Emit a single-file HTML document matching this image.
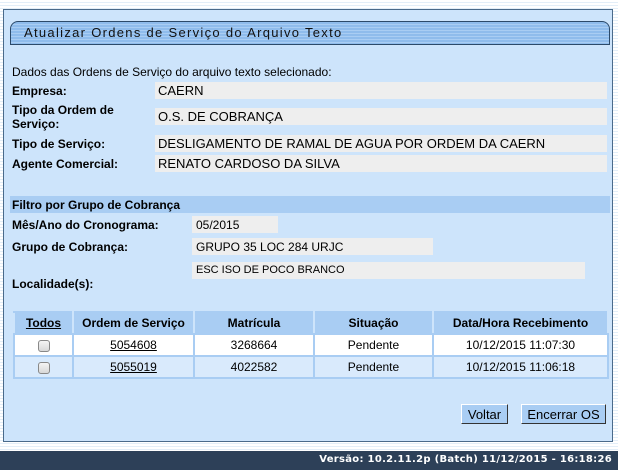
<!DOCTYPE html>
<html><head><meta charset="utf-8"><style>
*{margin:0;padding:0;box-sizing:border-box}
body{width:618px;height:470px;position:relative;overflow:hidden;font-family:"Liberation Sans",Arial,sans-serif;font-size:12px;color:#000;background:repeating-linear-gradient(#fff 0 2px,#e3eef8 2px 3px)}
.a{position:absolute}
#panel{left:3px;top:9px;width:610px;height:433px;background:#cde4fb;border:1px solid #4a6a8a}
#title{left:10px;top:21px;width:600px;height:24px;border:1px solid #2c4a6a;border-radius:8px 8px 0 0;background:repeating-linear-gradient(#8fbcec 0 2px,#a9cdf3 2px 3px);font-size:13px;letter-spacing:1.3px;padding:3px 0 0 13px;color:#111}
.lb{font-weight:bold;font-size:12px}
.bx{background:#eeeeee;font-size:13px;padding:1px 0 0 3px}
.fb{background:#eeeeee;font-size:12px;padding:2px 0 0 4px}
table{position:absolute;left:13px;top:311px;width:596px;border-collapse:collapse}
td,th{text-align:center;font-size:12px;border:2px solid #a9cdf3}
th{background:#a9cdf3;height:22px;font-weight:bold;border-color:#a9cdf3 #cde4fb}
td{height:22px}
u{text-decoration:underline}
.cb{display:inline-block;width:12px;height:12px;border:1px solid #888;border-radius:3px;background:linear-gradient(#f4f4f4,#d8d8d8);vertical-align:middle}
.btn{background:#a9cdf3;border:1px solid #000;border-color:#fff #333 #333 #fff;font-size:13px;text-align:center;padding-top:2px}
#foot{left:0;top:451px;width:618px;height:19px;background:#2d4058;color:#fff;font-family:"DejaVu Sans",sans-serif;font-weight:bold;font-size:10px;text-align:right;padding:3px 6px 0 0;letter-spacing:0.3px}
</style></head><body>
<div id="panel" class="a"></div>
<div id="title" class="a">Atualizar Ordens de Serviço do Arquivo Texto</div>
<div class="a" style="left:12px;top:65px">Dados das Ordens de Serviço do arquivo texto selecionado:</div>
<div class="a lb" style="left:12px;top:84px">Empresa:</div>
<div class="a bx" style="left:155px;top:82px;width:452px;height:17px">CAERN</div>
<div class="a lb" style="left:12px;top:103px;line-height:14px">Tipo da Ordem de<br>Serviço:</div>
<div class="a bx" style="left:155px;top:108px;width:452px;height:17px">O.S. DE COBRANÇA</div>
<div class="a lb" style="left:12px;top:137px">Tipo de Serviço:</div>
<div class="a bx" style="left:155px;top:135px;width:452px;height:17px">DESLIGAMENTO DE RAMAL DE AGUA POR ORDEM DA CAERN</div>
<div class="a lb" style="left:12px;top:157px">Agente Comercial:</div>
<div class="a bx" style="left:155px;top:155px;width:452px;height:17px">RENATO CARDOSO DA SILVA</div>
<div class="a lb" style="left:10px;top:196px;width:600px;height:17px;background:#a9cdf3;padding:2px 0 0 2px">Filtro por Grupo de Cobrança</div>
<div class="a lb" style="left:12px;top:218px">Mês/Ano do Cronograma:</div>
<div class="a fb" style="left:192px;top:216px;width:86px;height:17px">05/2015</div>
<div class="a lb" style="left:12px;top:240px">Grupo de Cobrança:</div>
<div class="a fb" style="left:192px;top:238px;width:241px;height:17px">GRUPO 35 LOC 284 URJC</div>
<div class="a fb" style="left:192px;top:262px;width:393px;height:17px;font-size:11px">ESC ISO DE POCO BRANCO</div>
<div class="a lb" style="left:12px;top:277px">Localidade(s):</div>
<table>
<tr><th style="width:59px"><u>Todos</u></th><th style="width:121px">Ordem de Serviço</th><th style="width:120px">Matrícula</th><th style="width:119px">Situação</th><th>Data/Hora Recebimento</th></tr>
<tr style="background:#fff"><td><span class="cb"></span></td><td><u>5054608</u></td><td>3268664</td><td>Pendente</td><td>10/12/2015 11:07:30</td></tr>
<tr style="background:#d9eafc"><td><span class="cb"></span></td><td><u>5055019</u></td><td>4022582</td><td>Pendente</td><td>10/12/2015 11:06:18</td></tr>
</table>
<div class="a btn" style="left:461px;top:404px;width:47px;height:20px">Voltar</div>
<div class="a btn" style="left:521px;top:404px;width:85px;height:20px">Encerrar OS</div>
<div id="foot" class="a">Versão: 10.2.11.2p (Batch) 11/12/2015 - 16:18:26</div>
</body></html>
